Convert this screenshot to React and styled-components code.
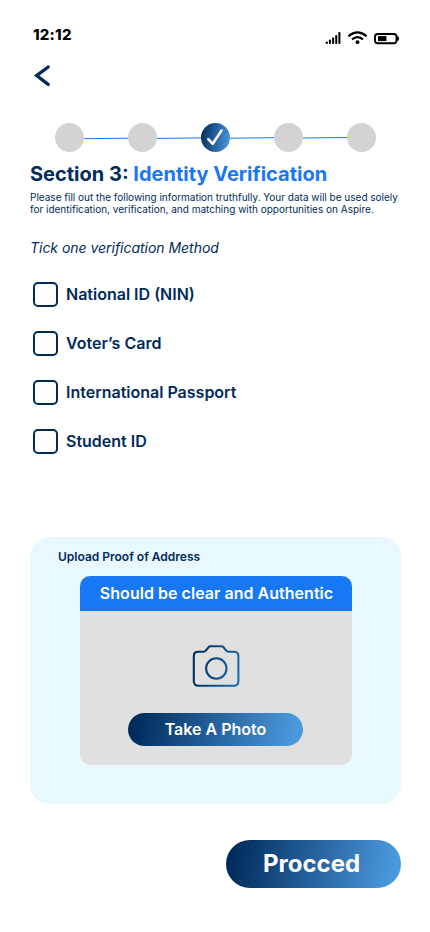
import React, { useState } from "react";
import styled, { createGlobalStyle } from "styled-components";

const navy = "#002b5b";
const blue = "#1877f2";
const gradient = "linear-gradient(100deg, #002b5b 4%, #4a98dd 94%)";

const GlobalStyle = createGlobalStyle`
  *, *::before, *::after { box-sizing: border-box; }
  body { margin: 0; background: #fff; font-family: "Inter", sans-serif; color: ${navy}; }
  button { font: inherit; border: 0; padding: 0; background: none; cursor: pointer; }
  h1, h2, p { margin: 0; }
`;

const Screen = styled.main`
  width: 430px;
  height: 932px;
  padding: 25px 29px 0 30px;
  display: flex;
  flex-direction: column;
  overflow: hidden;
`;

const StatusBar = styled.header`
  height: 20px;
  padding: 0 1px 0 3px;
  display: flex;
  justify-content: space-between;
  align-items: center;
`;

const Clock = styled.span`
  font-size: 15px;
  line-height: 20px;
  font-weight: 800;
  letter-spacing: 0.2px;
  color: #000;
`;

const StatusIcons = styled.svg`
  width: 76px;
  height: 20px;
  margin-top: 6px;
`;

const BackButton = styled.button`
  width: 24px;
  height: 24px;
  margin: 19px 0 0 1px;
  svg { display: block; }
`;

const Stepper = styled.div`
  display: flex;
  align-items: center;
  margin: 35px 25px 0;
  height: 29px;
`;

const Step = styled.span`
  flex: 0 0 29px;
  height: 29px;
  border-radius: 50%;
  background: ${(p) => (p.$active ? gradient : "#d3d3d3")};
  svg { display: block; }
`;

const Connector = styled.svg`
  flex: 0 0 44px;
  height: 4px;
`;

const Title = styled.h1`
  margin-top: 10px;
  font-size: 20px;
  line-height: 24px;
  font-weight: 700;
  white-space: nowrap;
  span { color: ${blue}; }
`;

const Intro = styled.p`
  margin-top: 5px;
  font-size: 10px;
  line-height: 12px;
  white-space: nowrap;
`;

const Prompt = styled.p`
  margin-top: 24px;
  font-size: 14px;
  line-height: 17px;
  font-style: italic;
  letter-spacing: -0.03px;
`;

const Options = styled.div`
  margin: 26px 0 0 3px;
  display: flex;
  flex-direction: column;
  gap: 24px;
`;

const Option = styled.label`
  height: 25px;
  display: flex;
  align-items: center;
  gap: 8px;
  font-size: 16px;
  line-height: 19px;
  font-weight: 600;
  cursor: pointer;
`;

const Checkbox = styled.input`
  appearance: none;
  width: 25px;
  height: 25px;
  margin: 0;
  border: 2px solid ${navy};
  border-radius: 5px;
  &:checked { background: ${navy}; box-shadow: inset 0 0 0 3px #fff; }
`;

const UploadPanel = styled.section`
  margin-top: 83px;
  height: 267px;
  padding: 12px 49px 0 50px;
  border-radius: 20px;
  background: #e9f7ff;
`;

const PanelTitle = styled.h2`
  margin-left: -22px;
  font-size: 12px;
  line-height: 15px;
  font-weight: 600;
`;

const UploadCard = styled.div`
  margin-top: 12px;
  height: 189px;
  border-radius: 10px;
  overflow: hidden;
  background: #e0e0e0;
  display: flex;
  flex-direction: column;
  align-items: center;
`;

const CardHeader = styled.div`
  align-self: stretch;
  height: 35px;
  background: ${blue};
  color: #fff;
  font-size: 16px;
  line-height: 35px;
  font-weight: 600;
  letter-spacing: 0.03px;
  padding-left: 1px;
  text-align: center;
`;

const Camera = styled.svg`
  width: 48px;
  height: 44px;
  margin-top: 33px;
`;

const PillButton = styled.button`
  && {
    width: 175px;
    height: ${(p) => (p.$large ? 48 : 33)}px;
    border-radius: 24px;
    background: ${gradient};
    color: #fff;
    font-size: ${(p) => (p.$large ? 24 : 16)}px;
    font-weight: ${(p) => (p.$large ? 700 : 600)};
    padding-bottom: 2px;
  }
`;

const PhotoButton = styled(PillButton)`
  margin: 25px 2px 0 0;
  && { padding-left: 1px; }
`;

const ProceedButton = styled(PillButton)`
  align-self: flex-end;
  margin-top: 36px;
  && { padding-right: 4px; }
`;

const methods = ["National ID (NIN)", "Voter’s Card", "International Passport", "Student ID"];
const connectors = [
  [2.7, 2.2],
  [2.4, 1.9],
  [2.2, 1.7],
  [2.0, 1.5],
];

function StatusGlyphs() {
  return (
    <StatusIcons viewBox="0 0 76 20" aria-hidden="true">
      {[2.5, 4.5, 6.5, 9, 12].map((h, i) => (
        <rect key={h} x={1.8 + i * 3.15} y={16 - h} width="2" height={h} rx=".7" fill="#000" />
      ))}
      <g fill="none" stroke="#000" strokeWidth="2.1" strokeLinecap="butt">
        <path d="M24.4 8.2Q33.5 0.4 42.6 8.2" />
        <path d="M28 11.4Q33.5 6.8 39 11.4" />
      </g>
      <circle cx="33.5" cy="14.2" r="1.9" fill="#000" />
      <rect x="51" y="6" width="21.5" height="9.2" rx="2.7" fill="none" stroke="#000" strokeWidth="1.9" />
      <rect x="54" y="8.1" width="8.4" height="5" fill="#000" />
      <path d="M73 8.2h.8q1.2 0 1.2 2.3t-1.2 2.3H73z" fill="#000" />
    </StatusIcons>
  );
}

export default function App() {
  const [picked, setPicked] = useState(null);
  return (
    <>
      <GlobalStyle />
      <Screen>
        <StatusBar>
          <Clock>12:12</Clock>
          <StatusGlyphs />
        </StatusBar>
        <BackButton aria-label="Back">
          <svg width="24" height="24" viewBox="0 0 24 24" fill="none" stroke={navy} strokeWidth="3.3" strokeLinecap="round">
            <path d="M17.2 3 5.6 11.6 17.2 20.4" />
          </svg>
        </BackButton>
        <Stepper>
          {[0, 1, 2, 3, 4].map((i) => (
            <React.Fragment key={i}>
              {i > 0 && (
                <Connector viewBox="0 0 44 4">
                  <path d={`M0 ${connectors[i - 1][0]}L44 ${connectors[i - 1][1]}`} stroke={blue} />
                </Connector>
              )}
              <Step $active={i === 2}>
                {i === 2 && (
                  <svg width="29" height="29" viewBox="0 0 29 29" fill="none" stroke="#fff">
                    <path d="M7.3 16.2 11.7 20.8 20.5 7.6" strokeWidth="2.6" strokeLinecap="round" strokeLinejoin="round" />
                  </svg>
                )}
              </Step>
            </React.Fragment>
          ))}
        </Stepper>
        <Title>
          Section 3: <span>Identity Verification</span>
        </Title>
        <Intro>
          Please fill out the following information truthfully. Your data will be used solely
          <br />
          for identification, verification, and matching with opportunities on Aspire.
        </Intro>
        <Prompt>Tick one verification Method</Prompt>
        <Options>
          {methods.map((m) => (
            <Option key={m}>
              <Checkbox type="checkbox" checked={picked === m} onChange={() => setPicked(picked === m ? null : m)} />
              {m}
            </Option>
          ))}
        </Options>
        <UploadPanel>
          <PanelTitle>Upload Proof of Address</PanelTitle>
          <UploadCard>
            <CardHeader>Should be clear and Authentic</CardHeader>
            <Camera viewBox="0 0 48 44" fill="none" stroke="url(#cameraStroke)" strokeWidth="2.1">
              <defs>
                <linearGradient id="cameraStroke" gradientUnits="userSpaceOnUse" x1="0" y1="18" x2="48" y2="26">
                  <stop offset="0.04" stopColor="#002b5b" />
                  <stop offset="1" stopColor="#1f6cb0" />
                </linearGradient>
              </defs>
              <path d="M6.3 7.7H11.5Q13 7.7 14 6.4L16.7 3Q17.4 2.2 18.5 2.2H29.5Q30.6 2.2 31.3 3L34 6.4Q35 7.7 36.5 7.7H41.7Q46.4 7.7 46.4 12.2V37Q46.4 41.7 41.7 41.7H6.3Q1.8 41.7 1.8 37V12.2Q1.8 7.7 6.3 7.7Z" />
              <circle cx="24.3" cy="24.5" r="10.2" />
            </Camera>
            <PhotoButton>Take A Photo</PhotoButton>
          </UploadCard>
        </UploadPanel>
        <ProceedButton $large>Procced</ProceedButton>
      </Screen>
    </>
  );
}
